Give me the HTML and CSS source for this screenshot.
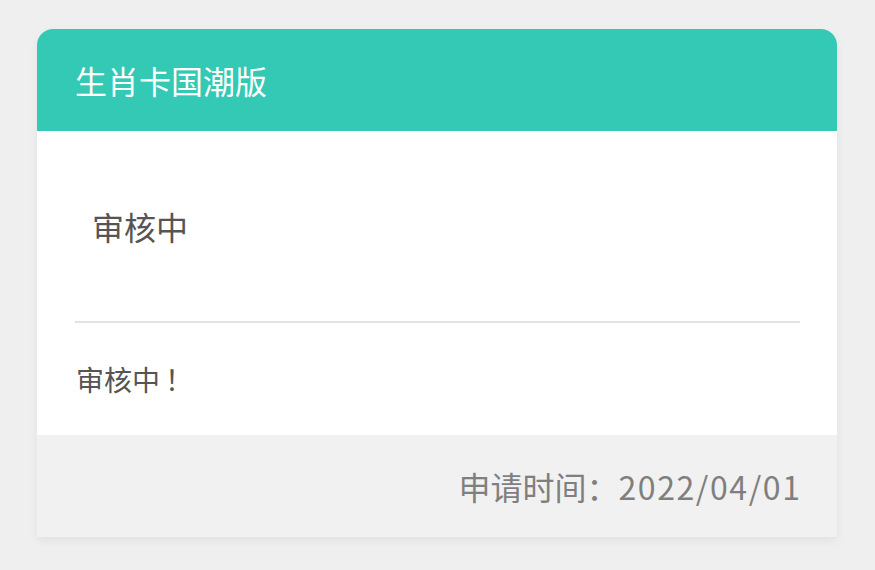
FILE: index.html
```html
<!DOCTYPE html>
<html lang="zh">
<head>
<meta charset="utf-8">
<link rel="stylesheet" href="styles.css">
</head>
<body>
<div class="card">
  <div class="card-header">生肖卡国潮版</div>
  <div class="card-body">
    <div class="status">审核中</div>
    <div class="divider"></div>
    <div class="message">审核中<span class="bang">！</span></div>
  </div>
  <div class="card-footer">申请时间：<span class="date">2022/04/01</span></div>
</div>
</body>
</html>
```

FILE: styles.css
```css
html, body {
  margin: 0;
  padding: 0;
}
body {
  background: #efefef;
  font-family: "Noto Sans CJK SC", "Noto Sans", sans-serif;
  width: 875px;
  height: 570px;
  overflow: hidden;
}
.card {
  margin: 29px 0 0 37px;
  width: 800px;
  border-radius: 16px 16px 0 0;
  background: #fff;
  box-shadow: 0 4px 10px rgba(0, 0, 0, 0.06);
  overflow: hidden;
}
.card-header {
  height: 102px;
  background: #33c9b4;
  color: #fff;
  font-size: 32px;
  display: flex;
  align-items: center;
  padding-left: 38px;
}
.card-body {
  display: flex;
  flex-direction: column;
}
.status {
  height: 190px;
  display: flex;
  align-items: center;
  padding-left: 55px;
  font-size: 32px;
  color: #555;
}
.divider {
  height: 2px;
  background: #e3e3e3;
  margin: 0 37px 0 38px;
}
.message {
  height: 112px;
  display: flex;
  align-items: center;
  padding-left: 39px;
  font-size: 28px;
  color: #555;
}
.bang {
  padding-left: 5px;
}
.card-footer {
  height: 102px;
  background: #f1f1f1;
  display: flex;
  align-items: center;
  justify-content: flex-end;
  padding-right: 37px;
  font-size: 32px;
  color: #7f7f7f;
}
.date {
  letter-spacing: 1.6px;
  margin-right: -1.6px;
}
```
